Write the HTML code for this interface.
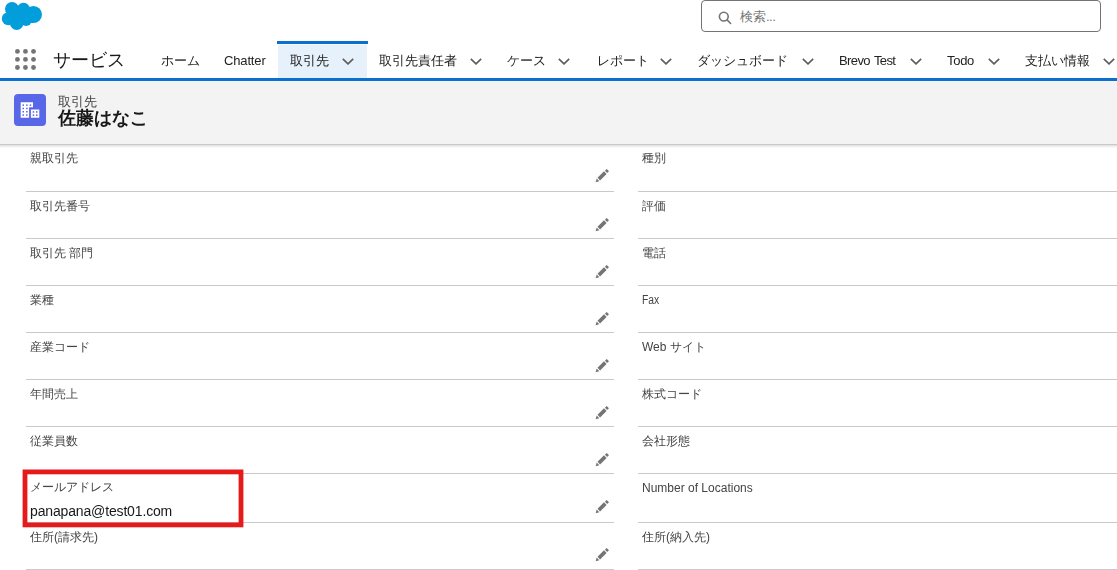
<!DOCTYPE html>
<html lang="ja">
<head>
<meta charset="utf-8">
<title>佐藤はなこ | 取引先 | Salesforce</title>
<style>
html,body{margin:0;padding:0;}
body{width:1117px;height:570px;overflow:hidden;background:#fff;position:relative;
  font-family:"Liberation Sans",sans-serif;color:#181818;-webkit-font-smoothing:antialiased;}
.abs{position:absolute;white-space:nowrap;}
/* global header */
#logo{left:0;top:0;width:48px;height:36px;}
#search{left:701px;top:0;width:398px;height:30px;border:1px solid #747474;border-radius:4px;background:#fff;}
#search svg{position:absolute;left:15px;top:9px;}
#search > span{position:absolute;left:38px;top:6.6px;font-size:13px;line-height:18px;color:#747474;}
/* nav */
#navline{left:0;top:78px;width:1117px;height:3px;background:#0b6fce;}
#tabactive{left:278px;top:44px;width:89px;height:34px;background:linear-gradient(to bottom,#f4f9fd 0,#f4f9fd 1px,#e6f1fb 1px);}
#tabbar{left:277px;top:41px;width:91px;height:3px;background:#0b6fce;}
#appname{left:53px;top:45.7px;font-size:18px;line-height:28px;color:#181818;}
.nav{top:52px;font-size:13px;line-height:18px;color:#222;}
.chev{top:58px;width:12px;height:7px;}
/* record header */
#rechead{left:0;top:81px;width:1117px;height:63px;background:#f3f3f3;}
#recshadow{left:0;top:144px;width:1117px;height:4px;
  background:linear-gradient(to bottom,#c9c9c9 0,#c9c9c9 1px,#e3e3e3 1px,#e3e3e3 2px,#efefef 2px,#efefef 3px,#fafafa 3px,#fafafa 4px);}
#recicon{left:14px;top:94px;width:32px;height:32px;border-radius:4px;background:#5867e8;}
#rectype{left:58px;top:93px;font-size:13px;line-height:18px;color:#444;}
#recname{left:58px;top:105.1px;font-size:18px;line-height:26px;font-weight:bold;color:#181818;}
/* fields */
.ln{height:1px;background:#c9c9c9;}
.ll{left:26px;width:588px;}
.lr{left:638px;width:479px;}
.lab{font-size:12px;line-height:18px;color:#444;}
.l1{left:30px;}
.l2{left:642px;}
.val{left:30px;top:500.5px;font-size:14px;line-height:20px;color:#181818;letter-spacing:-0.15px;}
.en{position:relative;top:0.3px;}
.pen{left:594.8px;width:14px;height:14px;}
</style>
</head>
<body><div id="root" style="position:absolute;left:0;top:0;width:1117px;height:570px;opacity:0.999">

<!-- Salesforce cloud logo -->
<svg id="logo" class="abs" viewBox="0 0 48 36">
  <g fill="#009edb">
    <circle cx="12" cy="8.9" r="7"/>
    <circle cx="23.5" cy="9.4" r="6.6"/>
    <circle cx="33.4" cy="14.5" r="8.6"/>
    <circle cx="8.3" cy="18.7" r="6.5"/>
    <circle cx="16.7" cy="23.3" r="6.7"/>
    <circle cx="26.1" cy="20.1" r="5.8"/>
    <rect x="8" y="8" width="26" height="15"/>
  </g>
</svg>

<!-- global search -->
<div id="search" class="abs">
  <svg width="16" height="16" viewBox="0 0 16 16"><circle cx="6.8" cy="6.6" r="4.4" fill="none" stroke="#747474" stroke-width="1.6"/><path d="M10.1 9.9 L13.6 13.5" stroke="#747474" stroke-width="1.6" stroke-linecap="round" fill="none"/></svg>
  <span>検索<span style="letter-spacing:-0.5px">...</span></span>
</div>

<!-- app launcher -->
<svg class="abs" style="left:13px;top:47px" width="24" height="24" viewBox="0 0 24 24"><g fill="#747474"><circle cx="4.45" cy="4.45" r="2.4"/><circle cx="12.45" cy="4.45" r="2.4"/><circle cx="20.50" cy="4.45" r="2.4"/><circle cx="4.45" cy="12.45" r="2.4"/><circle cx="12.45" cy="12.45" r="2.4"/><circle cx="20.50" cy="12.45" r="2.4"/><circle cx="4.45" cy="20.50" r="2.4"/><circle cx="12.45" cy="20.50" r="2.4"/><circle cx="20.50" cy="20.50" r="2.4"/></g></svg>
<div id="appname" class="abs">サービス</div>

<!-- nav tabs -->
<div id="tabactive" class="abs"></div>
<div id="tabbar" class="abs"></div>
<div class="abs nav" style="left:161px">ホーム</div>
<div class="abs nav" style="left:224px;letter-spacing:-0.15px">Chatter</div>
<div class="abs nav" style="left:290px">取引先</div>
<div class="abs nav" style="left:379px">取引先責任者</div>
<div class="abs nav" style="left:507px">ケース</div>
<div class="abs nav" style="left:597px">レポート</div>
<div class="abs nav" style="left:697px">ダッシュボード</div>
<div class="abs nav" style="left:839px;letter-spacing:-0.6px;word-spacing:1.2px">Brevo Test</div>
<div class="abs nav" style="left:947px;letter-spacing:-0.3px">Todo</div>
<div class="abs nav" style="left:1025px">支払い情報</div>

<svg class="abs chev" style="left:342px" viewBox="0 0 12 7"><path d="M0.8 0.9 L6 5.9 L11.2 0.9" fill="none" stroke="#5c5c5c" stroke-width="1.6"/></svg>
<svg class="abs chev" style="left:470px" viewBox="0 0 12 7"><path d="M0.8 0.9 L6 5.9 L11.2 0.9" fill="none" stroke="#5c5c5c" stroke-width="1.6"/></svg>
<svg class="abs chev" style="left:558px" viewBox="0 0 12 7"><path d="M0.8 0.9 L6 5.9 L11.2 0.9" fill="none" stroke="#5c5c5c" stroke-width="1.6"/></svg>
<svg class="abs chev" style="left:660px" viewBox="0 0 12 7"><path d="M0.8 0.9 L6 5.9 L11.2 0.9" fill="none" stroke="#5c5c5c" stroke-width="1.6"/></svg>
<svg class="abs chev" style="left:802px" viewBox="0 0 12 7"><path d="M0.8 0.9 L6 5.9 L11.2 0.9" fill="none" stroke="#5c5c5c" stroke-width="1.6"/></svg>
<svg class="abs chev" style="left:910px" viewBox="0 0 12 7"><path d="M0.8 0.9 L6 5.9 L11.2 0.9" fill="none" stroke="#5c5c5c" stroke-width="1.6"/></svg>
<svg class="abs chev" style="left:988px" viewBox="0 0 12 7"><path d="M0.8 0.9 L6 5.9 L11.2 0.9" fill="none" stroke="#5c5c5c" stroke-width="1.6"/></svg>
<svg class="abs chev" style="left:1103px" viewBox="0 0 12 7"><path d="M0.8 0.9 L6 5.9 L11.2 0.9" fill="none" stroke="#5c5c5c" stroke-width="1.6"/></svg>

<div id="navline" class="abs"></div>

<!-- record header -->
<div id="rechead" class="abs"></div>
<div id="recshadow" class="abs"></div>
<div id="recicon" class="abs">
  <svg width="32" height="32" viewBox="0 0 32 32">
    <path d="M6.7 8.3 H19 V13.2 H15.1 V23.7 H6.7 Z M16.9 15.6 H25.3 V23.7 H16.9 Z" fill="#fff"/>
    <g fill="#5867e8">
      <rect x="8.5" y="10.4" width="1.5" height="1.5"/><rect x="12.1" y="10.4" width="1.5" height="1.5"/><rect x="15.7" y="10.4" width="1.5" height="1.5"/>
      <rect x="8.5" y="13.7" width="1.5" height="1.5"/><rect x="12.1" y="13.7" width="1.5" height="1.5"/>
      <rect x="8.5" y="17" width="1.5" height="1.5"/><rect x="12.1" y="17" width="1.5" height="1.5"/>
      <rect x="8.5" y="20.3" width="1.5" height="1.5"/><rect x="12.1" y="20.3" width="1.5" height="1.5"/>
      <rect x="18.7" y="17.2" width="1.5" height="1.5"/><rect x="22" y="17.2" width="1.5" height="1.5"/>
      <rect x="18.7" y="20.4" width="1.5" height="1.5"/><rect x="22" y="20.4" width="1.5" height="1.5"/>
    </g>
  </svg>
</div>
<div id="rectype" class="abs">取引先</div>
<div id="recname" class="abs">佐藤はなこ</div>

<!-- detail fields -->
<div class="abs lab l1" style="top:149px">親取引先</div>
<div class="abs lab l2" style="top:149px">種別</div>
<svg class="abs pen" style="top:169.4px" viewBox="0 0 14 14"><g transform="translate(0.6 13.3) rotate(-45)" fill="#747474"><path d="M0 0 L3.4 -1.8 L3.4 1.8 Z"/><rect x="4.5" y="-1.8" width="9.2" height="3.6"/><rect x="14.8" y="-1.65" width="2.5" height="3.3" rx="0.4"/></g></svg>
<div class="abs ln ll" style="top:191px"></div>
<div class="abs ln lr" style="top:191px"></div>
<div class="abs lab l1" style="top:196.8px">取引先番号</div>
<div class="abs lab l2" style="top:196.8px">評価</div>
<svg class="abs pen" style="top:218.3px" viewBox="0 0 14 14"><g transform="translate(0.6 13.3) rotate(-45)" fill="#747474"><path d="M0 0 L3.4 -1.8 L3.4 1.8 Z"/><rect x="4.5" y="-1.8" width="9.2" height="3.6"/><rect x="14.8" y="-1.65" width="2.5" height="3.3" rx="0.4"/></g></svg>
<div class="abs ln ll" style="top:238px"></div>
<div class="abs ln lr" style="top:238px"></div>
<div class="abs lab l1" style="top:243.8px">取引先 部門</div>
<div class="abs lab l2" style="top:243.8px">電話</div>
<svg class="abs pen" style="top:265.3px" viewBox="0 0 14 14"><g transform="translate(0.6 13.3) rotate(-45)" fill="#747474"><path d="M0 0 L3.4 -1.8 L3.4 1.8 Z"/><rect x="4.5" y="-1.8" width="9.2" height="3.6"/><rect x="14.8" y="-1.65" width="2.5" height="3.3" rx="0.4"/></g></svg>
<div class="abs ln ll" style="top:285px"></div>
<div class="abs ln lr" style="top:285px"></div>
<div class="abs lab l1" style="top:290.8px">業種</div>
<div class="abs lab l2" style="top:290.8px"><span class="en" style="display:inline-block;transform:scaleX(0.86);transform-origin:0 50%">Fax</span></div>
<svg class="abs pen" style="top:312.3px" viewBox="0 0 14 14"><g transform="translate(0.6 13.3) rotate(-45)" fill="#747474"><path d="M0 0 L3.4 -1.8 L3.4 1.8 Z"/><rect x="4.5" y="-1.8" width="9.2" height="3.6"/><rect x="14.8" y="-1.65" width="2.5" height="3.3" rx="0.4"/></g></svg>
<div class="abs ln ll" style="top:332px"></div>
<div class="abs ln lr" style="top:332px"></div>
<div class="abs lab l1" style="top:337.8px">産業コード</div>
<div class="abs lab l2" style="top:337.8px"><span class="en">Web</span> サイト</div>
<svg class="abs pen" style="top:359.3px" viewBox="0 0 14 14"><g transform="translate(0.6 13.3) rotate(-45)" fill="#747474"><path d="M0 0 L3.4 -1.8 L3.4 1.8 Z"/><rect x="4.5" y="-1.8" width="9.2" height="3.6"/><rect x="14.8" y="-1.65" width="2.5" height="3.3" rx="0.4"/></g></svg>
<div class="abs ln ll" style="top:379px"></div>
<div class="abs ln lr" style="top:379px"></div>
<div class="abs lab l1" style="top:384.8px">年間売上</div>
<div class="abs lab l2" style="top:384.8px">株式コード</div>
<svg class="abs pen" style="top:406.3px" viewBox="0 0 14 14"><g transform="translate(0.6 13.3) rotate(-45)" fill="#747474"><path d="M0 0 L3.4 -1.8 L3.4 1.8 Z"/><rect x="4.5" y="-1.8" width="9.2" height="3.6"/><rect x="14.8" y="-1.65" width="2.5" height="3.3" rx="0.4"/></g></svg>
<div class="abs ln ll" style="top:426px"></div>
<div class="abs ln lr" style="top:426px"></div>
<div class="abs lab l1" style="top:431.8px">従業員数</div>
<div class="abs lab l2" style="top:431.8px">会社形態</div>
<svg class="abs pen" style="top:453.3px" viewBox="0 0 14 14"><g transform="translate(0.6 13.3) rotate(-45)" fill="#747474"><path d="M0 0 L3.4 -1.8 L3.4 1.8 Z"/><rect x="4.5" y="-1.8" width="9.2" height="3.6"/><rect x="14.8" y="-1.65" width="2.5" height="3.3" rx="0.4"/></g></svg>
<div class="abs ln ll" style="top:473px"></div>
<div class="abs ln lr" style="top:473px"></div>
<div class="abs lab l1" style="top:478px">メールアドレス</div>
<div class="abs lab l2" style="top:478.8px"><span class="en">Number of Locations</span></div>
<div class="abs val">panapana@test01.com</div>
<svg class="abs pen" style="top:500.4px" viewBox="0 0 14 14"><g transform="translate(0.6 13.3) rotate(-45)" fill="#747474"><path d="M0 0 L3.4 -1.8 L3.4 1.8 Z"/><rect x="4.5" y="-1.8" width="9.2" height="3.6"/><rect x="14.8" y="-1.65" width="2.5" height="3.3" rx="0.4"/></g></svg>
<div class="abs ln ll" style="top:522px"></div>
<div class="abs ln lr" style="top:522px"></div>
<div class="abs lab l1" style="top:527.8px">住所(請求先)</div>
<div class="abs lab l2" style="top:527.8px">住所(納入先)</div>
<svg class="abs pen" style="top:548.4px" viewBox="0 0 14 14"><g transform="translate(0.6 13.3) rotate(-45)" fill="#747474"><path d="M0 0 L3.4 -1.8 L3.4 1.8 Z"/><rect x="4.5" y="-1.8" width="9.2" height="3.6"/><rect x="14.8" y="-1.65" width="2.5" height="3.3" rx="0.4"/></g></svg>
<div class="abs ln ll" style="top:569px"></div>
<div class="abs ln lr" style="top:569px"></div>
<svg class="abs" style="left:0;top:460px" width="260" height="80" viewBox="0 460 260 80"><rect x="25" y="471.9" width="216" height="53" fill="none" stroke="#e51a1a" stroke-width="4.8"/></svg>

</div></body>
</html>
